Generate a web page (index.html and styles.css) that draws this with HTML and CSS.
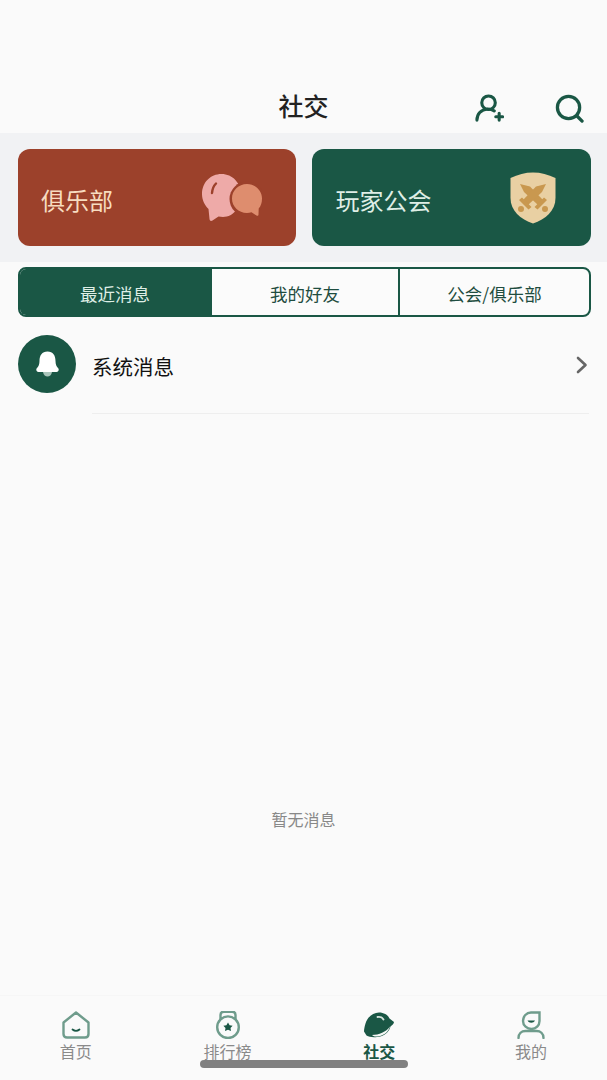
FILE: index.html
```html
<!DOCTYPE html>
<html lang="zh-CN">
<head>
    <meta charset="utf-8">
    <title>社交</title>
    <link rel="stylesheet" href="styles.css">
</head>
<body>
    <div class="page">
        <header class="top-bar">
            <h1 class="title">社交</h1>
            <div class="top-actions">
                <svg class="top-icon" viewBox="0 0 30 30" fill="none" stroke="#1a5745" stroke-width="3.200" stroke-linecap="round">
                    <circle cx="14" cy="9" r="7"/>
                    <path d="M2 27c0-6 4-11 11-11.500 2.500 0 5 .5 7 2"/>
                    <path d="M21.500 23.500h7M25 20v7"/>
                </svg>
                <svg class="top-icon" viewBox="0 0 30 30" fill="none" stroke="#1a5745" stroke-width="3.400" stroke-linecap="round">
                    <circle cx="14" cy="14" r="11.500"/>
                    <path d="M23 23l5 5"/>
                </svg>
            </div>
        </header>

        <section class="card-band">
            <div class="card card-club">
                <span class="card-label">俱乐部</span>
                <svg class="card-icon" viewBox="0 0 60 47">
                    <path d="M19.500 0C8.500 0 0 8.500 0 20c0 6 2.500 11 6.500 15l1 10c.2 1.800 1.500 2.400 3 1.400l6-4c1.500.3 3 .5 4.500.5C32 42.900 39 33 39 20.500 39 9 30.500 0 19.500 0z" fill="#eeaaa8"/>
                    <path d="M10 19c.3-4 1.500-7 4-9.500" fill="none" stroke="#9c412b" stroke-width="2.400" stroke-linecap="round"/>
                    <circle cx="45" cy="25" r="17.500" fill="#9c412b"/>
                    <path d="M45 10c-8.500 0-15 6.500-15 14.500S36.500 39 45 39c1.500 0 3-.2 4.500-.7l5 3.200c1 .6 2 .2 2-1l.2-6c2.300-2.600 3.300-6 3.300-10C60 16.500 53.500 10 45 10z" fill="#de8d6e"/>
                </svg>
            </div>
            <div class="card card-guild">
                <span class="card-label">玩家公会</span>
                <svg class="card-icon card-icon-guild" viewBox="0 0 46 52">
                    <path d="M23 .5C15 .5 8 2.500 .5 6v20c0 13 10 21 22.500 25.500C35.500 47 45.500 39 45.500 26V6C38 2.500 31 .5 23 .5z" fill="#e9d0a3"/>
                    <g fill="#c9984f">
                        <path d="M10 12l10 2.500 13 13.500-5 5-14-13z"/>
                        <path d="M36 12l-10 2.500-13 13.500 5 5 14-13z"/>
                        <path d="M9 28l3-2.500 9.500 9.500-3 2.500zM37 28l-3-2.500-9.500 9.500 3 2.500z"/>
                        <circle cx="11" cy="37" r="3"/>
                        <circle cx="35" cy="37" r="3"/>
                    </g>
                </svg>
            </div>
        </section>

        <nav class="tabs">
            <div class="tab tab-active">最近消息</div>
            <div class="tab">我的好友</div>
            <div class="tab">公会/俱乐部</div>
        </nav>

        <div class="msg-row">
            <div class="msg-avatar">
                <svg class="bell" viewBox="0 0 23 26">
                    <path d="M11.500 .5C6 .5 3.500 4.500 3.500 10c0 3.500-1 5.500-2.500 7-1.500 1.500-.5 4 1.500 4h18c2 0 3-2.500 1.500-4-1.500-1.500-2.500-3.500-2.500-7C19.500 4.500 17 .5 11.500.5z" fill="#fff"/>
                    <path d="M7 21h9c-.5 3-2.500 4.500-4.500 4.500S7.500 24 7 21z" fill="#a9c4ba"/>
                </svg>
            </div>
            <div class="msg-body">
                <span class="msg-title">系统消息</span>
                <svg class="chevron" viewBox="0 0 12 18" fill="none" stroke="#666" stroke-width="2.600" stroke-linecap="round" stroke-linejoin="round">
                    <path d="M2 2l7.500 7L2 16"/>
                </svg>
            </div>
        </div>

        <main class="empty">暂无消息</main>

        <footer class="tab-bar">
            <div class="bar-item">
                <svg class="bar-icon" viewBox="0 0 28 28" fill="none" stroke="#6f9c8c" stroke-width="2.400" stroke-linejoin="round" stroke-linecap="round">
                    <path d="M1.500 11.500L14 1.500l12.500 10V23c0 2.200-1.300 3.500-3.500 3.500H5c-2.200 0-3.500-1.300-3.500-3.500z"/>
                    <path d="M10.500 18.500c2 1.500 5 1.500 7 0" stroke="#1a5745" stroke-width="1.800"/>
                </svg>
                <span>首页</span>
            </div>
            <div class="bar-item">
                <svg class="bar-icon" viewBox="0 0 28 28" fill="none" stroke="#6f9c8c" stroke-width="2.400">
                    <path d="M6.500 9V4C6.500 2 7.800.7 9.800.7h8.400c2 0 3.300 1.300 3.300 3.300v5"/>
                    <circle cx="14" cy="16.200" r="10.800"/>
                    <path d="M14 11.500l1.600 2.700 3 .5-2.100 2.300.5 3-3-1.200-3 1.200.5-3-2.100-2.300 3-.5z" fill="#1a5745" stroke="none"/>
                </svg>
                <span>排行榜</span>
            </div>
            <div class="bar-item bar-item-active">
                <svg class="bar-icon bar-icon-wide" viewBox="0 0 30 28">
                    <path d="M15 1.500c5 0 9 2.500 10.500 6l4.500 3.500c0 1.500-2 3.500-3.500 4.500-1.500 6-6.500 10-13.500 10.500-4 .5-8 0-10.500-1.500L0 20.500c0-2 .5-5 1.500-8C3 6.500 9 1.500 15 1.500z" fill="#1a5745"/>
                    <path d="M13.500 6c3-.5 5 .5 6 2.500" fill="none" stroke="#d5e3dd" stroke-width="1.800" stroke-linecap="round"/>
                    <path d="M8 24c7 0 14-3 18-8.500-1.500 5.500-6.500 9.500-13 10-2 .2-3.500-.3-5-1.500z" fill="#f4f7f5"/>
                </svg>
                <span>社交</span>
            </div>
            <div class="bar-item">
                <svg class="bar-icon" viewBox="0 0 28 28" fill="none" stroke="#6f9c8c" stroke-width="2.400" stroke-linecap="round">
                    <path d="M14 1.500h8.500V10c0 4.500-3.500 8-8 8S6 14.500 6 10s3.500-8.500 8-8.500z"/>
                    <path d="M10.500 9.500c1.500 3 6 3 7.500 0z" fill="#1a5745" stroke="none"/>
                    <path d="M1.500 27c0-4.500 3-7 7-7h11c4 0 7 2.500 7 7"/>
                </svg>
                <span>我的</span>
            </div>
        </footer>

        <div class="home-line"></div>
    </div>
</body>
</html>
```

FILE: styles.css
```css
* {
    box-sizing: border-box;
}
body {
    margin: 0;
    background-color: #fafafa;
    font-family: "Noto Sans CJK SC", "Noto Sans", sans-serif;
}
.page {
    position: relative;
    display: flex;
    flex-direction: column;
    height: 1080px;
    overflow: hidden;
}
.top-bar {
    position: relative;
    height: 133px;
    padding-top: 87px;
    text-align: center;
}
.title {
    margin: 0;
    font-size: 25px;
    line-height: 36px;
    font-weight: 500;
    color: #222;
}
.top-actions {
    position: absolute;
    top: 94px;
    right: 23px;
    display: flex;
    gap: 51px;
}
.top-icon {
    width: 29px;
    height: 29px;
}
.card-band {
    display: flex;
    gap: 16px;
    height: 129px;
    padding: 16px 16px 16px 18px;
    background-color: #f1f2f4;
}
.card {
    flex: 1;
    display: flex;
    align-items: center;
    justify-content: space-between;
    border-radius: 12px;
}
.card-club {
    padding: 0 34px 0 23px;
    background-color: #9c412b;
    color: #f7dcc0;
}
.card-guild {
    padding: 0 35px 0 24px;
    background-color: #1a5745;
    color: #dfeee6;
}
.card-label {
    padding-top: 5px;
    font-size: 24px;
    line-height: 36px;
}
.card-icon {
    width: 60px;
    height: 47px;
}
.card-icon-guild {
    width: 46px;
    height: 52px;
}
.tabs {
    display: grid;
    grid-template-columns: 190px 188px 1fr;
    height: 50px;
    margin: 5px 16px 0 18px;
    border: 2px solid #1a5745;
    border-radius: 8px;
    overflow: hidden;
    background-color: #fbfbfb;
}
.tab {
    display: flex;
    align-items: center;
    justify-content: center;
    padding-top: 3px;
    font-size: 17.500px;
    color: #1f4d40;
    border-left: 2px solid #1a5745;
}
.tab:first-child {
    border-left: 0;
}
.tab-active {
    background-color: #1a5745;
    color: #dfeee6;
}
.msg-row {
    display: flex;
    margin: 18px 18px 0;
    gap: 16px;
}
.msg-avatar {
    flex: none;
    display: flex;
    align-items: center;
    justify-content: center;
    width: 58px;
    height: 58px;
    border-radius: 50%;
    background-color: #1a5745;
}
.bell {
    width: 23px;
    height: 26px;
}
.msg-body {
    flex: 1;
    display: flex;
    align-items: center;
    justify-content: space-between;
    height: 79px;
    padding: 0 1px 17px 0;
    border-bottom: 1px solid #eeeeee;
}
.msg-title {
    font-size: 20.500px;
    color: #111;
}
.chevron {
    width: 12px;
    height: 18px;
    margin-bottom: 2px;
}
.empty {
    flex: 1;
    padding-top: 393px;
    text-align: center;
    font-size: 16px;
    line-height: 24px;
    color: #888;
}
.tab-bar {
    display: flex;
    height: 85px;
    padding-top: 15px;
    border-top: 1px solid #f6f6f6;
}
.bar-item {
    flex: 1;
    display: flex;
    flex-direction: column;
    align-items: center;
    font-size: 16px;
    line-height: 22px;
    color: #8a8a8a;
}
.bar-item-active {
    color: #1a5745;
    font-weight: 700;
}
.bar-icon {
    width: 28px;
    height: 28px;
    margin-bottom: 1px;
}
.bar-icon-wide {
    width: 30px;
}
.home-line {
    position: absolute;
    left: 200px;
    bottom: 12px;
    width: 208px;
    height: 8px;
    border-radius: 4px;
    background-color: #808080;
}
```
